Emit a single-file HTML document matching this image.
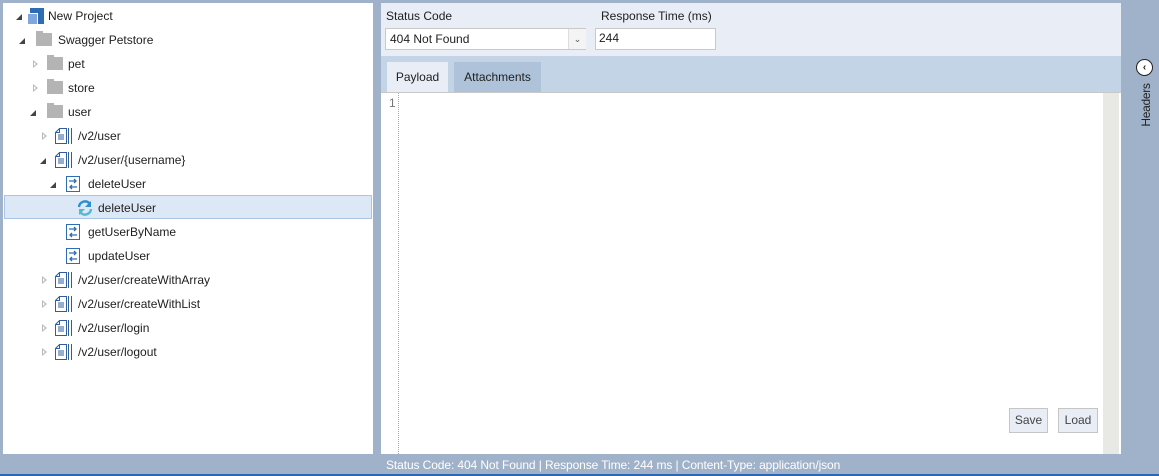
<!DOCTYPE html><html><head><style>
body{margin:0;width:1159px;height:476px;background:#a0b2c9;font-family:"Liberation Sans",sans-serif;font-size:12px;color:#1e1e1e;position:relative;overflow:hidden}
.abs{position:absolute}
#left{left:3px;top:3px;width:370px;height:451px;background:#fff}
.row{position:absolute;height:24px;line-height:24px;white-space:nowrap}
.row .t{position:absolute;top:0}
.arr{position:absolute;top:8px;width:0;height:0}
.open{border-left:6px solid transparent;border-bottom:6px solid #444;top:10px}
.closed{border-top:4px solid transparent;border-bottom:4px solid transparent;border-left:5px solid #bbb}
.closed:after{content:"";position:absolute;left:-4px;top:-2px;border-top:2px solid transparent;border-bottom:2px solid transparent;border-left:2px solid #fff}
.fold{position:absolute;top:5px;width:16px;height:13px;background:#b4b4b4}
.fold:before{content:"";position:absolute;left:0;top:-2px;width:7px;height:2px;background:#b4b4b4}
svg{position:absolute}
#right{left:381px;top:3px;width:740px;height:451px;background:#fff}
</style></head><body>
<div id="left" class="abs">
 <div class="row" style="top:1px;left:0;width:370px">
  <div class="arr open" style="left:13px"></div>
  <svg style="left:24px;top:4px" width="17" height="16"><rect x="3" y="0" width="14" height="16" fill="#2e6db4"/><rect x="0" y="5" width="11" height="11" fill="#fff"/><rect x="1" y="6" width="9" height="10" fill="#7ea8dd"/></svg>
  <span class="t" style="left:45px">New Project</span></div>
 <div class="row" style="top:25px">
  <div class="arr open" style="left:16px"></div><div class="fold" style="left:33px"></div>
  <span class="t" style="left:55px">Swagger Petstore</span></div>
 <div class="row" style="top:49px"><div class="arr closed" style="left:30px"></div><div class="fold" style="left:44px"></div><span class="t" style="left:65px">pet</span></div>
 <div class="row" style="top:73px"><div class="arr closed" style="left:30px"></div><div class="fold" style="left:44px"></div><span class="t" style="left:65px">store</span></div>
 <div class="row" style="top:97px"><div class="arr open" style="left:27px"></div><div class="fold" style="left:44px"></div><span class="t" style="left:65px">user</span></div>

 <div class="row" style="top:121px"><div class="arr closed" style="left:39px"></div>
  <svg style="left:52px;top:4px" width="18" height="16"><path d="M4.5 .5h7v15h-11V4.5z M.5 4.5h4v-4" fill="#fff" stroke="#2e5e9e"/><path d="M3 7h6M3 9h6M3 11h6" stroke="#2e5e9e"/><path d="M13.5 0v16M16.5 0v16" stroke="#2e5e9e"/></svg>
  <span class="t" style="left:75px">/v2/user</span></div>
 <div class="row" style="top:145px"><div class="arr open" style="left:37px"></div>
  <svg style="left:52px;top:4px" width="18" height="16"><path d="M4.5 .5h7v15h-11V4.5z M.5 4.5h4v-4" fill="#fff" stroke="#2e5e9e"/><path d="M3 7h6M3 9h6M3 11h6" stroke="#2e5e9e"/><path d="M13.5 0v16M16.5 0v16" stroke="#2e5e9e"/></svg>
  <span class="t" style="left:75px">/v2/user/{username}</span></div>
 <div class="row" style="top:169px"><div class="arr open" style="left:47px"></div>
  <svg style="left:63px;top:4px" width="14" height="16"><rect x=".5" y=".5" width="13" height="15" fill="#fff" stroke="#2e6db4"/><path d="M3 5h7M8 3l2 2-2 2M11 11H4M6 9l-2 2 2 2" fill="none" stroke="#2e6db4" stroke-width="1.3"/></svg>
  <span class="t" style="left:85px">deleteUser</span></div>
 <div class="row" style="top:192px;left:1px;width:366px;height:22px;line-height:22px;background:#dde8f6;border:1px solid #a8c4e6"></div>
 <div class="row" style="top:193px">
  <svg style="left:74px;top:4px" width="16" height="16"><path d="M2 7a6 6 0 0 1 10.5-3.5" fill="none" stroke="#2e8fcf" stroke-width="2.4"/><path d="M14 1v6h-6z" fill="#2e8fcf"/><path d="M14 9a6 6 0 0 1-10.5 3.5" fill="none" stroke="#4fbad0" stroke-width="2.4"/><path d="M2 15v-6h6z" fill="#4fbad0"/></svg>
  <span class="t" style="left:95px">deleteUser</span></div>
 <div class="row" style="top:217px">
  <svg style="left:63px;top:4px" width="14" height="16"><rect x=".5" y=".5" width="13" height="15" fill="#fff" stroke="#2e6db4"/><path d="M3 5h7M8 3l2 2-2 2M11 11H4M6 9l-2 2 2 2" fill="none" stroke="#2e6db4" stroke-width="1.3"/></svg>
  <span class="t" style="left:85px">getUserByName</span></div>
 <div class="row" style="top:241px">
  <svg style="left:63px;top:4px" width="14" height="16"><rect x=".5" y=".5" width="13" height="15" fill="#fff" stroke="#2e6db4"/><path d="M3 5h7M8 3l2 2-2 2M11 11H4M6 9l-2 2 2 2" fill="none" stroke="#2e6db4" stroke-width="1.3"/></svg>
  <span class="t" style="left:85px">updateUser</span></div>
 <div class="row" style="top:265px"><div class="arr closed" style="left:39px"></div>
  <svg style="left:52px;top:4px" width="18" height="16"><path d="M4.5 .5h7v15h-11V4.5z M.5 4.5h4v-4" fill="#fff" stroke="#2e5e9e"/><path d="M3 7h6M3 9h6M3 11h6" stroke="#2e5e9e"/><path d="M13.5 0v16M16.5 0v16" stroke="#2e5e9e"/></svg>
  <span class="t" style="left:75px">/v2/user/createWithArray</span></div>
 <div class="row" style="top:289px"><div class="arr closed" style="left:39px"></div>
  <svg style="left:52px;top:4px" width="18" height="16"><path d="M4.5 .5h7v15h-11V4.5z M.5 4.5h4v-4" fill="#fff" stroke="#2e5e9e"/><path d="M3 7h6M3 9h6M3 11h6" stroke="#2e5e9e"/><path d="M13.5 0v16M16.5 0v16" stroke="#2e5e9e"/></svg>
  <span class="t" style="left:75px">/v2/user/createWithList</span></div>
 <div class="row" style="top:313px"><div class="arr closed" style="left:39px"></div>
  <svg style="left:52px;top:4px" width="18" height="16"><path d="M4.5 .5h7v15h-11V4.5z M.5 4.5h4v-4" fill="#fff" stroke="#2e5e9e"/><path d="M3 7h6M3 9h6M3 11h6" stroke="#2e5e9e"/><path d="M13.5 0v16M16.5 0v16" stroke="#2e5e9e"/></svg>
  <span class="t" style="left:75px">/v2/user/login</span></div>
 <div class="row" style="top:337px"><div class="arr closed" style="left:39px"></div>
  <svg style="left:52px;top:4px" width="18" height="16"><path d="M4.5 .5h7v15h-11V4.5z M.5 4.5h4v-4" fill="#fff" stroke="#2e5e9e"/><path d="M3 7h6M3 9h6M3 11h6" stroke="#2e5e9e"/><path d="M13.5 0v16M16.5 0v16" stroke="#2e5e9e"/></svg>
  <span class="t" style="left:75px">/v2/user/logout</span></div>
</div>

<div id="right" class="abs">
 <div class="abs" style="left:0;top:0;width:740px;height:53px;background:#e8edf6"></div>
 <div class="abs" style="left:5px;top:6px">Status Code</div>
 <div class="abs" style="left:220px;top:6px">Response Time (ms)</div>
 <div class="abs" style="left:4px;top:25px;width:199px;height:20px;background:#fff;border:1px solid #c9c9c9"><span class="abs" style="left:4px;top:3px">404 Not Found</span><div class="abs" style="left:182px;top:0;width:17px;height:20px;border-left:1px solid #ddd;background:#f4f4f4;text-align:center;font-size:9px;line-height:20px;color:#555">&#8964;</div></div>
 <div class="abs" style="left:214px;top:25px;width:119px;height:20px;background:#fff;border:1px solid #c9c9c9"><span class="abs" style="left:3px;top:2px">244</span></div>
 <div class="abs" style="left:0;top:53px;width:740px;height:36px;background:#c2d4e6"></div>
 <div class="abs" style="left:6px;top:59px;width:61px;height:30px;background:#e8edf6;text-align:center;line-height:30px">Payload</div>
 <div class="abs" style="left:73px;top:59px;width:87px;height:30px;background:#aec3da;text-align:center;line-height:30px">Attachments</div>
 <div class="abs" style="left:0;top:89px;width:740px;height:1px;background:#c8c8c8"></div>
 <div class="abs" style="left:8px;top:93px;color:#777">1</div>
 <div class="abs" style="left:17px;top:90px;height:361px;border-left:1px dotted #aaa"></div>
 <div class="abs" style="left:722px;top:90px;width:16px;height:361px;background:#e8e8e4"></div>
 <div class="abs" style="left:628px;top:405px;width:37px;height:23px;background:#e8edf6;border:1px solid #c5c5c5;text-align:center;line-height:23px;color:#444">Save</div>
 <div class="abs" style="left:677px;top:405px;width:38px;height:23px;background:#e8edf6;border:1px solid #c5c5c5;text-align:center;line-height:23px;color:#444">Load</div>
</div>
<div class="abs" style="left:1136px;top:59px;width:15px;height:15px;border:1px solid #222;border-radius:50%;background:#fff;text-align:center;line-height:15px;font-size:10px;font-weight:bold">&#8249;</div>
<div class="abs" style="left:1106px;top:97px;width:80px;height:16px;line-height:16px;transform:rotate(-90deg);transform-origin:50% 50%;color:#222;text-align:center;letter-spacing:-0.3px">Headers</div>
<div class="abs" style="left:386px;top:458px;color:#fff;letter-spacing:-0.1px">Status Code: 404 Not Found | Response Time: 244 ms | Content-Type: application/json</div>
<div class="abs" style="left:0;top:474px;width:1159px;height:2px;background:#2b67b0"></div>
</body></html>
